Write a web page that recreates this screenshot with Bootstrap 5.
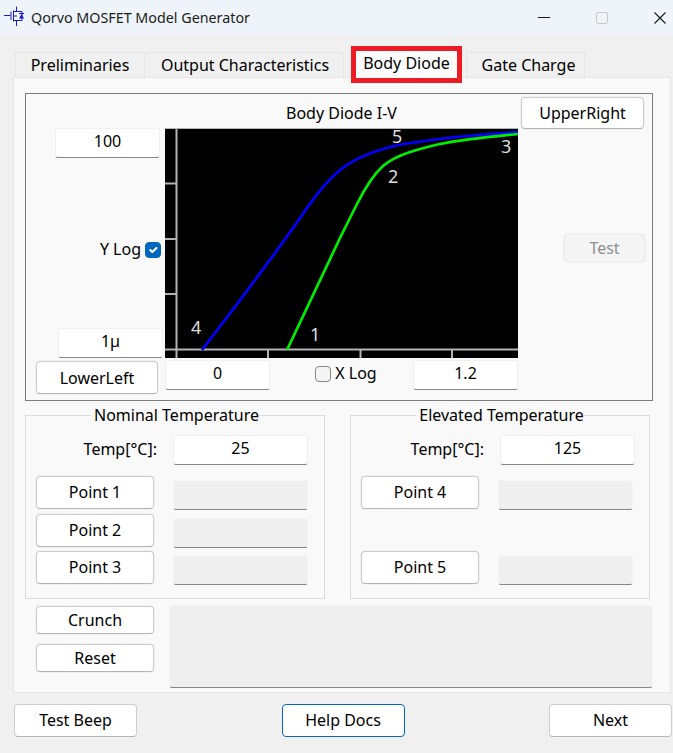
<!DOCTYPE html>
<html lang="en">
<head>
<meta charset="utf-8">
<title>Qorvo MOSFET Model Generator</title>
<link href="https://cdn.jsdelivr.net/npm/bootstrap@5.3.0/dist/css/bootstrap.min.css" rel="stylesheet">
<style>
html,body{margin:0;background:#f0f0f0;}
body{font-family:"Noto Sans","Open Sans","Liberation Sans",sans-serif;font-size:16px;color:#000;line-height:1.2;}
.app-win{width:673px;height:753px;overflow:hidden;background:#f0f0f0;}
.title-strip{height:35px;background:#eef4f9;padding-left:4px;padding-right:7px;font-size:14.3px;color:#1c1c1c;}
.title-icon{width:20px;height:20px;margin-right:7px;margin-top:-3px;}
.win-ctrls{gap:46px;}
.tab-row{margin:11px 0 0 15px;height:31px;border:0;flex-wrap:nowrap;align-items:flex-start;}
.tab-row .nav-link{height:25px;margin:6px 0 0 0;padding:2px 0 0 0;border:1px solid #e6e6e6;border-bottom:0;border-radius:0;background:#f0f0f0;color:#000;display:flex;align-items:center;justify-content:center;}
.tab-a{width:130px;}
.tab-row .nav-link.tab-b{width:200px;margin-left:-1px;padding-left:2px;}
.tab-row .nav-link.tab-on{width:111px;height:37px;margin:0 4px 0 7px;border:5px solid #ed1c24;background:#fbfbfb;position:relative;z-index:2;padding:0 0 2px 0;}
.tab-row .nav-link.tab-d{width:119px;padding-left:6px;}
.tab-panel{margin-left:13px;width:658px;height:616px;background:#f9f9f9;border:1px solid #e6e6e6;padding:15px 17px 0 11px;border-radius:0;}
.plot-frame{width:628px;height:308px;border:1px solid #7c7c7c;display:grid;grid-template-columns:139px 353px 134px;grid-template-rows:34px 230px 42px;}
.plot-title{display:flex;align-items:center;justify-content:center;padding-top:5px;}
.win-btn{display:flex;align-items:center;justify-content:center;padding:0;background:#fff;border:1px solid #cdcdcd;border-bottom-color:#b4b4b4;border-radius:4px;color:#000;font-size:16px;line-height:1;box-shadow:0 0 0 1px #f1f1f1;}
.win-btn:hover{background:#fff;color:#000;border-color:#cdcdcd;}
.btn-up{width:123px;height:32px;margin:3px 0 0 3px;}
.btn-ll{width:122px;height:33px;margin:3px 0 0 10px;}
.btn-test:disabled{width:81px;height:28px;margin:106px 0 0 46px;background:#f5f5f5;color:#8f8f8f;border-color:#ececec;opacity:1;box-shadow:0 0 0 1px #f0f0f0;}
.btn-pt{width:118px;height:33px;padding-bottom:1px;}
.btn-sm2{width:118px;height:28px;}
.btn-ft{width:123px;height:33px;padding-bottom:1px;}
.btn-help{border:1px solid #0067c0;box-shadow:none;}
.fld{display:block;height:30px;padding:0 0 4px 0;background:#fff;border:1px solid #f1f1f1;border-bottom-color:#868686;border-radius:3px;text-align:center;color:#000;font-size:16px;line-height:1;box-shadow:none;}
.fld:focus{background:#fff;border-color:#f1f1f1;border-bottom-color:#868686;box-shadow:none;}
.fld-w104{width:105px;}
.fld-w134{width:135px;}
.fld-off{background:#efefef;border-color:#f5f5f5;border-bottom-color:#868686;margin-top:4px;width:135px;}
.fld-off:disabled{background:#efefef;}
.side-col{display:flex;flex-direction:column;justify-content:space-between;}
.in-100{margin-left:29px;}
.in-1u{margin-left:32px;}
.log-row{display:flex;align-items:center;justify-content:flex-end;gap:4px;padding-right:4px;height:20px;margin-top:14px;}
.win-check{width:16px;height:16px;margin:0;flex:none;border-radius:3px;border:1px solid #878787;background-color:#f4f4f4;}
.win-check:checked{background-color:#0067c0;border-color:#0067c0;}
.plot-svg{display:block;width:353px;height:230px;overflow:visible;}
.plot-num{font-size:18px;fill:#dedede;font-family:"Noto Sans",sans-serif;}
.x-row{display:flex;justify-content:space-between;padding:2px 0 0 0;}
.x-log{display:flex;align-items:center;gap:4px;height:24px;margin-left:9px;margin-top:2px;}
.grp-row{display:flex;gap:25px;margin-top:14px;}
.grp-box{width:300px;height:184px;border:1px solid #dcdcdc;padding:19px 0 0 10px;}
.grp-legend{width:fit-content;margin:-29px auto 9px;padding:0 0 0 3px;background:#f9f9f9;transform:translateX(-5px);height:20px;display:flex;align-items:center;}
.grp-grid{display:grid;grid-template-columns:118px 135px;column-gap:19px;grid-template-rows:41px 38px 37px 37px;}
.tmp-lbl{display:flex;align-items:center;justify-content:flex-end;height:30px;margin-right:-3px;}
.tmp-lbl-e{margin-right:-5px;}
.in-e{margin-left:2px;}
.act-row{display:flex;margin-top:6px;padding-left:11px;gap:15px;}
.act-col{width:118px;padding-top:1px;gap:10px;}
.note-box,.note-box:disabled{width:484px;height:83px;padding:0;background:#efefef;border:1px solid #f5f5f5;border-bottom-color:#868686;border-radius:3px;resize:none;box-shadow:none;}
.foot-row{padding:11px 1px 0 14px;}
</style>
</head>
<body>
<div class="app-win d-flex flex-column">
  <div class="title-strip d-flex align-items-center">
    <svg class="title-icon" viewBox="0 0 20 20" fill="none" stroke="#1a1ad0" stroke-width="1">
      <path d="M0 9.5H6.5M7 5.5V14M9.5 4.5V15.500M9.5 5.500H18V14.500H9.500M12.500 5.500V0.500M12.500 14.500V20M9.500 10H13"/>
      <path d="M15 12.500H20L17.500 8Z" fill="#1a1ad0" stroke="none"/>
      <path d="M15 7.500H20" stroke="#1a1ad0"/>
    </svg>
    <span>Qorvo MOSFET Model Generator</span>
    <div class="win-ctrls d-flex align-items-center ms-auto">
      <svg width="12" height="12" viewBox="0 0 12 12"><path d="M0 5.5H12" stroke="#1a1a1a" stroke-width="1"/></svg>
      <svg width="12" height="12" viewBox="0 0 12 12"><rect x=".5" y=".5" width="11" height="11" rx="1.5" fill="none" stroke="#c8c8c8"/></svg>
      <svg width="12" height="12" viewBox="0 0 12 12"><path d="M.5 .5L11.5 11.5M11.5 .5L.5 11.5" stroke="#1a1a1a" stroke-width="1.1" fill="none"/></svg>
    </div>
  </div>

  <ul class="nav nav-tabs tab-row">
    <li class="nav-item"><a class="nav-link tab-a" href="#">Preliminaries</a></li>
    <li class="nav-item"><a class="nav-link tab-b" href="#">Output Characteristics</a></li>
    <li class="nav-item"><a class="nav-link tab-on active" href="#">Body Diode</a></li>
    <li class="nav-item"><a class="nav-link tab-d" href="#">Gate Charge</a></li>
  </ul>

  <div class="tab-panel">
    <div class="plot-frame">
      <div></div>
      <div class="plot-title">Body Diode I-V</div>
      <div><button type="button" class="btn win-btn btn-up">UpperRight</button></div>

      <div class="side-col">
        <input class="form-control fld fld-w104 in-100" value="100">
        <div class="log-row"><span>Y Log</span><input class="form-check-input win-check" type="checkbox" checked></div>
        <input class="form-control fld fld-w104 in-1u" value="1µ">
      </div>
      <svg class="plot-svg" viewBox="165 128 353 230">
        <rect x="165" y="128" width="353" height="230" fill="#000"/>
        <g fill="none" stroke="#b4b4b4" stroke-width="2">
          <path d="M165 128.5H518" stroke-width="1"/>
          <path d="M176.500 128V358M165 349.500H518"/>
          <path d="M165 183.500H176M165 239H176M165 294H176"/>
          <path d="M268 350V358M360.500 350V358M452 350V358"/>
        </g>
        <path d="M202 350C240 300 275 255 307 208C318 192 328 180 340 170C350 162 368 153 390 147C406.700 142.700 423.300 141.200 440 139C466 135.600 492 134.100 518 132" fill="none" stroke="#0000ff" stroke-width="2.700"/>
        <path d="M287 350L340 238L357 204C364 190 372 176 383 166C390 160 398 156 410 152C420 149 430 146 440 144C466 138.800 492 136.600 518 134" fill="none" stroke="#00ee00" stroke-width="2.700"/>
        <text class="plot-num" x="310" y="341">1</text>
        <text class="plot-num" x="388" y="183">2</text>
        <text class="plot-num" x="501" y="153">3</text>
        <text class="plot-num" x="191" y="334">4</text>
        <text class="plot-num" x="392" y="143">5</text>
      </svg>
      <div><button type="button" class="btn win-btn btn-test" disabled>Test</button></div>

      <div><button type="button" class="btn win-btn btn-ll">LowerLeft</button></div>
      <div class="x-row">
        <input class="form-control fld fld-w104" value="0">
        <div class="x-log"><input class="form-check-input win-check" type="checkbox"><span>X Log</span></div>
        <input class="form-control fld fld-w104" value="1.2">
      </div>
      <div></div>
    </div>

    <div class="grp-row">
      <div class="grp-box">
        <div class="grp-legend">Nominal Temperature</div>
        <div class="grp-grid">
          <div class="tmp-lbl">Temp[°C]:</div>
          <input class="form-control fld fld-w134" value="25">
          <button type="button" class="btn win-btn btn-pt">Point 1</button>
          <input class="form-control fld fld-off" disabled>
          <button type="button" class="btn win-btn btn-pt">Point 2</button>
          <input class="form-control fld fld-off" disabled>
          <button type="button" class="btn win-btn btn-pt">Point 3</button>
          <input class="form-control fld fld-off" disabled>
        </div>
      </div>
      <div class="grp-box">
        <div class="grp-legend">Elevated Temperature</div>
        <div class="grp-grid">
          <div class="tmp-lbl tmp-lbl-e">Temp[°C]:</div>
          <input class="form-control fld fld-w134 in-e" value="125">
          <button type="button" class="btn win-btn btn-pt">Point 4</button>
          <input class="form-control fld fld-off" disabled>
          <div></div><div></div>
          <button type="button" class="btn win-btn btn-pt">Point 5</button>
          <input class="form-control fld fld-off" disabled>
        </div>
      </div>
    </div>

    <div class="act-row">
      <div class="act-col d-flex flex-column">
        <button type="button" class="btn win-btn btn-sm2">Crunch</button>
        <button type="button" class="btn win-btn btn-sm2">Reset</button>
      </div>
      <textarea class="form-control note-box" disabled></textarea>
    </div>
  </div>

  <div class="foot-row d-flex justify-content-between">
    <button type="button" class="btn win-btn btn-ft">Test Beep</button>
    <button type="button" class="btn win-btn btn-ft btn-help">Help Docs</button>
    <button type="button" class="btn win-btn btn-ft">Next</button>
  </div>
</div>
</body>
</html>
